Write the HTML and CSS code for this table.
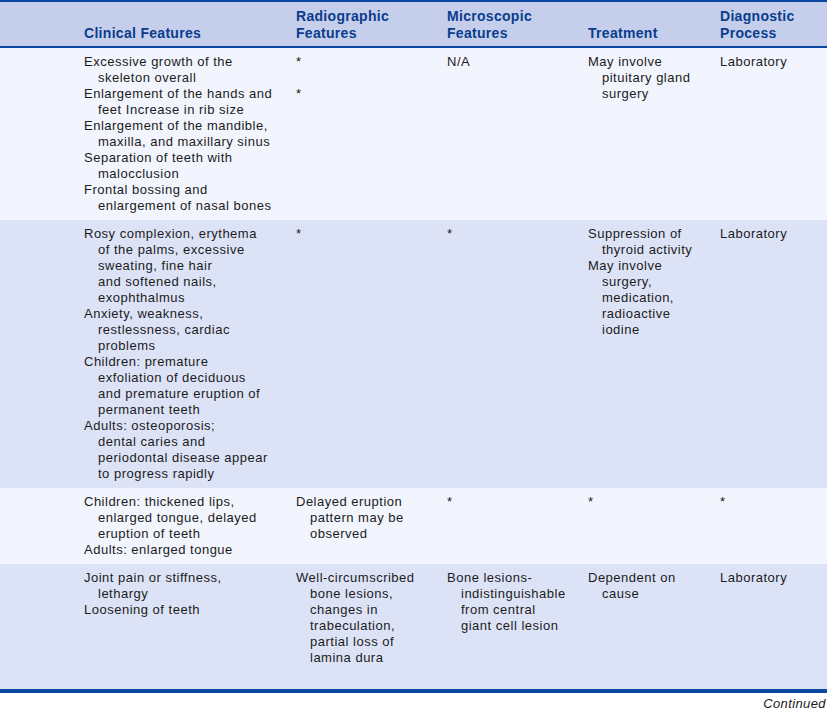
FILE: index.html
```html
<!DOCTYPE html>
<html lang="en">
<head>
<meta charset="utf-8">
<title>Table</title>
<link rel="stylesheet" href="styles.css">
</head>
<body>
<div class="table">
  <div class="row head">
    <div></div>
    <div class="hcell">Clinical Features</div>
    <div class="hcell">Radiographic<br>Features</div>
    <div class="hcell">Microscopic<br>Features</div>
    <div class="hcell">Treatment</div>
    <div class="hcell">Diagnostic<br>Process</div>
  </div>
  <div class="row light">
    <div></div>
    <div class="cell">
      <p class="item">Excessive growth of the<br>skeleton overall</p>
      <p class="item">Enlargement of the hands and<br>feet Increase in rib size</p>
      <p class="item">Enlargement of the mandible,<br>maxilla, and maxillary sinus</p>
      <p class="item">Separation of teeth with<br>malocclusion</p>
      <p class="item">Frontal bossing and<br>enlargement of nasal bones</p>
    </div>
    <div class="cell">
      <p class="item">*</p>
      <p class="item">&nbsp;</p>
      <p class="item">*</p>
    </div>
    <div class="cell"><p class="item">N/A</p></div>
    <div class="cell"><p class="item">May involve<br>pituitary gland<br>surgery</p></div>
    <div class="cell"><p class="item">Laboratory</p></div>
  </div>
  <div class="row blue">
    <div></div>
    <div class="cell">
      <p class="item">Rosy complexion, erythema<br>of the palms, excessive<br>sweating, fine hair<br>and softened nails,<br>exophthalmus</p>
      <p class="item">Anxiety, weakness,<br>restlessness, cardiac<br>problems</p>
      <p class="item">Children: premature<br>exfoliation of deciduous<br>and premature eruption of<br>permanent teeth</p>
      <p class="item">Adults: osteoporosis;<br>dental caries and<br>periodontal disease appear<br>to progress rapidly</p>
    </div>
    <div class="cell"><p class="item">*</p></div>
    <div class="cell"><p class="item">*</p></div>
    <div class="cell">
      <p class="item">Suppression of<br>thyroid activity</p>
      <p class="item">May involve<br>surgery,<br>medication,<br>radioactive<br>iodine</p>
    </div>
    <div class="cell"><p class="item">Laboratory</p></div>
  </div>
  <div class="row light">
    <div></div>
    <div class="cell">
      <p class="item">Children: thickened lips,<br>enlarged tongue, delayed<br>eruption of teeth</p>
      <p class="item">Adults: enlarged tongue</p>
    </div>
    <div class="cell"><p class="item">Delayed eruption<br>pattern may be<br>observed</p></div>
    <div class="cell"><p class="item">*</p></div>
    <div class="cell"><p class="item">*</p></div>
    <div class="cell"><p class="item">*</p></div>
  </div>
  <div class="row blue last">
    <div></div>
    <div class="cell">
      <p class="item">Joint pain or stiffness,<br>lethargy</p>
      <p class="item">Loosening of teeth</p>
    </div>
    <div class="cell"><p class="item">Well-circumscribed<br>bone lesions,<br>changes in<br>trabeculation,<br>partial loss of<br>lamina dura</p></div>
    <div class="cell"><p class="item">Bone lesions-<br>indistinguishable<br>from central<br>giant cell lesion</p></div>
    <div class="cell"><p class="item">Dependent on<br>cause</p></div>
    <div class="cell"><p class="item">Laboratory</p></div>
  </div>
</div>
<div class="continued">Continued</div>
</body>
</html>
```
FILE: styles.css
```css
html, body {
  margin: 0;
  padding: 0;
  background: #ffffff;
}
body {
  font-family: "Liberation Sans", Arial, sans-serif;
  color: #1b1b1b;
  width: 827px;
}
.table {
  border-top: 2px solid #0a47a0;
  border-bottom: 4px solid #0a47a0;
}
.row {
  display: grid;
  grid-template-columns: 84px 212px 151px 141px 132px 1fr;
}
.head {
  background: #c5cfec;
  border-bottom: 2px solid #0a47a0;
  padding: 6px 0 4px;
  align-items: end;
}
.hcell {
  font-weight: bold;
  font-size: 14px;
  line-height: 17px;
  letter-spacing: 0.3px;
  color: #0b3c8c;
}
.light {
  background: #f2f5fd;
}
.blue {
  background: #dde3f6;
}
.cell {
  padding: 6px 0 6px;
  font-size: 13px;
  line-height: 16px;
  letter-spacing: 0.5px;
}
.last .cell {
  padding-bottom: 23px;
}
.item {
  margin: 0;
  padding-left: 14px;
  text-indent: -14px;
  white-space: nowrap;
}
.continued {
  text-align: right;
  font-style: italic;
  font-size: 13px;
  line-height: 14px;
  letter-spacing: 0.4px;
  padding-top: 4px;
  padding-right: 1px;
}
```
